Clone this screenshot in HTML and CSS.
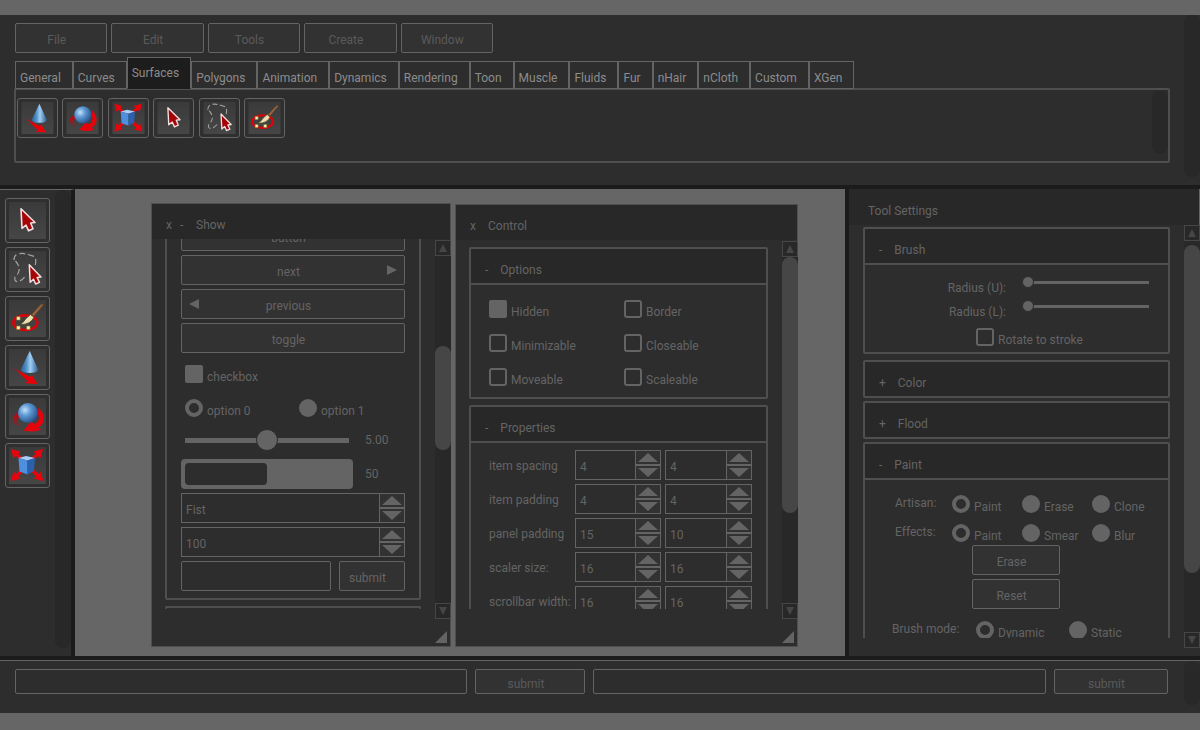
FILE: index.html
```html
<!DOCTYPE html>
<html lang="en">
<head>
<meta charset="utf-8">
<title>Tool Settings</title>
<link rel="stylesheet" href="styles.css">
</head>
<body>
<svg class="sprite" aria-hidden="true">
  <defs>
    <linearGradient id="tile" x1="0" y1="0" x2="0" y2="1"><stop offset="0" stop-color="#3a3a3a"/><stop offset="1" stop-color="#464646"/></linearGradient>
    <linearGradient id="coneFill" x1="0" y1="0" x2="1" y2="0"><stop offset="0" stop-color="#2c6298"/><stop offset=".3" stop-color="#4d8cc4"/><stop offset=".55" stop-color="#9fcdf2"/><stop offset="1" stop-color="#2b5c92"/></linearGradient>
    <radialGradient id="ballFill" cx=".35" cy=".35" r=".7"><stop offset="0" stop-color="#c4e0f8"/><stop offset=".4" stop-color="#5f9ad4"/><stop offset="1" stop-color="#254f88"/></radialGradient>
    <linearGradient id="fade" x1="0" y1="0" x2="1" y2="1"><stop offset="0" stop-color="#e00008" stop-opacity=".25"/><stop offset=".4" stop-color="#e80008"/></linearGradient>
    <linearGradient id="fadeUp" x1="0" y1="0" x2="0" y2="1"><stop offset="0" stop-color="#d00008"/><stop offset="1" stop-color="#d00008" stop-opacity=".15"/></linearGradient>
  </defs>
  <symbol id="i-select" viewBox="0 0 37 37">
    <rect width="37" height="37" fill="url(#tile)"/>
    <path d="M12 6.7 26 20.5 21.7 21 24 26.8 19.6 28.8 17 23.2 13 26.3Z" fill="#a60206" stroke="#f1dede" stroke-width="1.6" stroke-linejoin="round"/>
  </symbol>
  <symbol id="i-lasso" viewBox="0 0 37 37">
    <rect width="37" height="37" fill="url(#tile)"/>
    <path d="M5 9Q5 4 9 3T16 2.8 23.5 4.8 26.3 14M6.5 10Q10 14 10.2 18T6 26Q5 31 9 30.5T17 24" fill="none" stroke="#a4a4a4" stroke-width="1.2" stroke-dasharray="6 3"/>
    <path d="M20.3 13.800 32 26 28.200 26.600 30.500 31.400 26.600 33 24.500 28.200 21.200 31.200Z" fill="#a60206" stroke="#f1dede" stroke-width="1.500" stroke-linejoin="round"/>
  </symbol>
  <symbol id="i-paint" viewBox="0 0 37 37">
    <rect width="37" height="37" fill="url(#tile)"/>
    <ellipse cx="16.300" cy="22.700" rx="12" ry="7.300" fill="none" stroke="#d8040c" stroke-width="2.600"/>
    <path d="M22.500 14.500 32 4.200Q34 3 34.300 5L24.800 16.500Z" fill="#94653f" stroke="#5a3a20" stroke-width=".6"/>
    <path d="M21.500 14.500 25 17.200Q22 24.500 11 24.700 15 22 17 18.500Z" fill="#eadfae" stroke="#4a4326" stroke-width=".8"/>
    <path d="M7.700 16.700h3.400v3.400H7.700zM7.700 26h3.400v3.400H7.700zM17.700 26h3.400v3.400h-3.400z" fill="#fff8c0" stroke="#8b7d28" stroke-width=".7"/>
  </symbol>
  <symbol id="i-move" viewBox="0 0 37 37">
    <rect width="37" height="37" fill="url(#tile)"/>
    <path d="M20.700 2 29.300 20.700Q28 24 20.500 24T11.700 20.700Z" fill="url(#coneFill)"/>
    <path d="M3.500 18 21 28 22.500 25.500 28.500 35.300 16.500 34.300 18.500 32Z" fill="url(#fade)"/>
  </symbol>
  <symbol id="i-rotate" viewBox="0 0 37 37">
    <rect width="37" height="37" fill="url(#tile)"/>
    <path d="M8 15Q-.5 21 8 29L10.500 27Q6 22 10.500 19Z" fill="url(#fadeUp)"/>
    <path d="M29.500 9.500Q36 16 34.500 23 33 28 29 29.500L32 32Q24 34.500 14.500 32.500L22.500 23 24.500 26Q32 24 29 16Z" fill="#e5040c"/>
    <circle cx="19" cy="15" r="10" fill="url(#ballFill)"/>
  </symbol>
  <symbol id="i-scale" viewBox="0 0 37 37">
    <rect width="37" height="37" fill="url(#tile)"/>
    <path d="M2 2 11.500 4.500 9.300 6.800 14 11 11.500 13.500 7 9 4.500 11.300ZM34 2 24.500 4.500 26.700 6.800 22 11 24.500 13.500 29 9 31.500 11.300ZM2 34 11.500 31.800 9.300 29.500 14 25 11.500 22.500 7 27 4.500 24.500ZM34.300 34 25 31.800 27.200 29.500 22.500 25 25 22.500 29.500 27 32 24.500Z" fill="#e8040c"/>
    <path d="M9.500 11 17 9 26 11 18.500 13.500Z" fill="#a9cdf3"/>
    <path d="M9.500 11 18.500 13.500V27.500L10.500 24.500Z" fill="#4f8fdf"/>
    <path d="M18.500 13.500 26 11 25 24 18.500 27.500Z" fill="#2a60ac"/>
  </symbol>
</svg>

<header class="top">
  <div class="top-main">
    <nav class="menu">
      <button class="btn">File</button>
      <button class="btn">Edit</button>
      <button class="btn">Tools</button>
      <button class="btn">Create</button>
      <button class="btn">Window</button>
    </nav>
    <div class="tabs" role="tablist">
      <button class="tab" role="tab">General</button>
      <button class="tab" role="tab">Curves</button>
      <button class="tab active" role="tab" aria-selected="true">Surfaces</button>
      <button class="tab" role="tab">Polygons</button>
      <button class="tab" role="tab">Animation</button>
      <button class="tab" role="tab">Dynamics</button>
      <button class="tab" role="tab">Rendering</button>
      <button class="tab" role="tab">Toon</button>
      <button class="tab" role="tab">Muscle</button>
      <button class="tab" role="tab">Fluids</button>
      <button class="tab" role="tab">Fur</button>
      <button class="tab" role="tab">nHair</button>
      <button class="tab" role="tab">nCloth</button>
      <button class="tab" role="tab">Custom</button>
      <button class="tab" role="tab">XGen</button>
    </div>
    <div class="shelf">
      <div class="shelf-icons">
        <button class="icon" aria-label="Move"><svg><use href="#i-move"/></svg></button>
        <button class="icon" aria-label="Rotate"><svg><use href="#i-rotate"/></svg></button>
        <button class="icon" aria-label="Scale"><svg><use href="#i-scale"/></svg></button>
        <button class="icon" aria-label="Select"><svg><use href="#i-select"/></svg></button>
        <button class="icon" aria-label="Lasso"><svg><use href="#i-lasso"/></svg></button>
        <button class="icon" aria-label="Paint"><svg><use href="#i-paint"/></svg></button>
      </div>
      <div class="rail"></div>
    </div>
  </div>
  <div class="rail"></div>
</header>

<main class="middle">
  <aside class="toolbox">
    <div class="tools">
      <button class="icon" aria-label="Select"><svg><use href="#i-select"/></svg></button>
      <button class="icon" aria-label="Lasso"><svg><use href="#i-lasso"/></svg></button>
      <button class="icon" aria-label="Paint"><svg><use href="#i-paint"/></svg></button>
      <button class="icon" aria-label="Move"><svg><use href="#i-move"/></svg></button>
      <button class="icon" aria-label="Rotate"><svg><use href="#i-rotate"/></svg></button>
      <button class="icon" aria-label="Scale"><svg><use href="#i-scale"/></svg></button>
    </div>
    <div class="rail"></div>
  </aside>

  <section class="canvas">
    <section class="window show">
      <header class="title"><button class="plain">x</button><button class="plain">-</button><h2>Show</h2></header>
      <div class="frame">
        <div class="content from-end">
          <div class="group">
            <div class="rows">
              <button class="btn">button</button>
              <button class="btn with-arrow">next<i class="tri right"></i></button>
              <button class="btn with-arrow">previous<i class="tri left"></i></button>
              <button class="btn">toggle</button>
              <label class="opt"><input type="checkbox"><span>checkbox</span></label>
              <div class="pair">
                <label class="opt"><input type="radio" name="option" checked><span>option 0</span></label>
                <label class="opt"><input type="radio" name="option"><span>option 1</span></label>
              </div>
              <div class="valued"><input class="slider" type="range" min="0" max="10" value="5" aria-label="Value"><output>5.00</output></div>
              <div class="valued"><progress max="100" value="50" aria-label="Progress"></progress><output>50</output></div>
              <div class="spin"><select aria-label="Weapon"><option>Fist</option></select><div class="steps"><button aria-label="Previous"><i class="tri up"></i></button><button aria-label="Next"><i class="tri down"></i></button></div></div>
              <div class="spin"><input type="text" value="100" aria-label="Amount"><div class="steps"><button aria-label="Increase"><i class="tri up"></i></button><button aria-label="Decrease"><i class="tri down"></i></button></div></div>
              <div class="entry"><input class="field" type="text" aria-label="Text"><button class="btn">submit</button></div>
            </div>
          </div>
          <div class="group stub"></div>
        </div>
        <div class="scroll mid"><button aria-label="Scroll up"><i class="tri s-up"></i></button><div class="track"><div class="thumb"></div></div><button aria-label="Scroll down"><i class="tri s-down"></i></button></div>
      </div>
      <footer class="grip"><i></i></footer>
    </section>

    <section class="window control">
      <header class="title"><button class="plain">x</button><h2>Control</h2></header>
      <div class="frame">
        <div class="content">
          <div class="group">
            <h3><button class="plain">-</button>Options</h3>
            <div class="options">
              <label class="opt"><input type="checkbox"><span>Hidden</span></label>
              <label class="opt"><input type="checkbox" checked><span>Border</span></label>
              <label class="opt"><input type="checkbox" checked><span>Minimizable</span></label>
              <label class="opt"><input type="checkbox" checked><span>Closeable</span></label>
              <label class="opt"><input type="checkbox" checked><span>Moveable</span></label>
              <label class="opt"><input type="checkbox" checked><span>Scaleable</span></label>
            </div>
          </div>
          <div class="group">
            <h3><button class="plain">-</button>Properties</h3>
            <div class="props">
              <label for="p1">item spacing</label>
              <div class="spin"><input id="p1" type="text" value="4"><div class="steps"><button aria-label="Increase"><i class="tri up"></i></button><button aria-label="Decrease"><i class="tri down"></i></button></div></div>
              <div class="spin"><input type="text" value="4" aria-label="item spacing y"><div class="steps"><button aria-label="Increase"><i class="tri up"></i></button><button aria-label="Decrease"><i class="tri down"></i></button></div></div>
              <label for="p2">item padding</label>
              <div class="spin"><input id="p2" type="text" value="4"><div class="steps"><button aria-label="Increase"><i class="tri up"></i></button><button aria-label="Decrease"><i class="tri down"></i></button></div></div>
              <div class="spin"><input type="text" value="4" aria-label="item padding y"><div class="steps"><button aria-label="Increase"><i class="tri up"></i></button><button aria-label="Decrease"><i class="tri down"></i></button></div></div>
              <label for="p3">panel padding</label>
              <div class="spin"><input id="p3" type="text" value="15"><div class="steps"><button aria-label="Increase"><i class="tri up"></i></button><button aria-label="Decrease"><i class="tri down"></i></button></div></div>
              <div class="spin"><input type="text" value="10" aria-label="panel padding y"><div class="steps"><button aria-label="Increase"><i class="tri up"></i></button><button aria-label="Decrease"><i class="tri down"></i></button></div></div>
              <label for="p4">scaler size:</label>
              <div class="spin"><input id="p4" type="text" value="16"><div class="steps"><button aria-label="Increase"><i class="tri up"></i></button><button aria-label="Decrease"><i class="tri down"></i></button></div></div>
              <div class="spin"><input type="text" value="16" aria-label="scaler size y"><div class="steps"><button aria-label="Increase"><i class="tri up"></i></button><button aria-label="Decrease"><i class="tri down"></i></button></div></div>
              <label for="p5">scrollbar width:</label>
              <div class="spin"><input id="p5" type="text" value="16"><div class="steps"><button aria-label="Increase"><i class="tri up"></i></button><button aria-label="Decrease"><i class="tri down"></i></button></div></div>
              <div class="spin"><input type="text" value="16" aria-label="scrollbar width y"><div class="steps"><button aria-label="Increase"><i class="tri up"></i></button><button aria-label="Decrease"><i class="tri down"></i></button></div></div>
            </div>
          </div>
        </div>
        <div class="scroll high"><button aria-label="Scroll up"><i class="tri s-up"></i></button><div class="track"><div class="thumb"></div></div><button aria-label="Scroll down"><i class="tri s-down"></i></button></div>
      </div>
      <footer class="grip"><i></i></footer>
    </section>
  </section>

  <aside class="settings">
    <header class="title"><h2>Tool Settings</h2></header>
    <div class="frame">
      <div class="content">
        <div class="group">
          <h3><button class="plain">-</button>Brush</h3>
          <div class="brush">
            <div class="radius"><label for="ru">Radius (U):</label><input id="ru" class="slider thin" type="range" value="0"></div>
            <div class="radius"><label for="rl">Radius (L):</label><input id="rl" class="slider thin" type="range" value="0"></div>
            <label class="opt rotate"><input type="checkbox" checked><span>Rotate to stroke</span></label>
          </div>
        </div>
        <div class="group closed"><h3><button class="plain">+</button>Color</h3></div>
        <div class="group closed"><h3><button class="plain">+</button>Flood</h3></div>
        <div class="group">
          <h3><button class="plain">-</button>Paint</h3>
          <div class="paint">
            <div class="choices">
              <b>Artisan:</b>
              <label class="opt"><input type="radio" name="artisan" checked><span>Paint</span></label>
              <label class="opt"><input type="radio" name="artisan"><span>Erase</span></label>
              <label class="opt"><input type="radio" name="artisan"><span>Clone</span></label>
            </div>
            <div class="choices">
              <b>Effects:</b>
              <label class="opt"><input type="radio" name="effects" checked><span>Paint</span></label>
              <label class="opt"><input type="radio" name="effects"><span>Smear</span></label>
              <label class="opt"><input type="radio" name="effects"><span>Blur</span></label>
            </div>
            <button class="btn">Erase</button>
            <button class="btn">Reset</button>
            <div class="choices modes">
              <b>Brush mode:</b>
              <label class="opt"><input type="radio" name="mode" checked><span>Dynamic</span></label>
              <label class="opt"><input type="radio" name="mode"><span>Static</span></label>
            </div>
          </div>
        </div>
      </div>
      <div class="scroll tall"><button aria-label="Scroll up"><i class="tri s-up"></i></button><div class="track"><div class="thumb"></div></div><button aria-label="Scroll down"><i class="tri s-down"></i></button></div>
    </div>
  </aside>
</main>

<footer class="bottom">
  <form class="commands">
    <input class="field" type="text" aria-label="Command">
    <button class="btn" type="button">submit</button>
    <input class="field" type="text" aria-label="Second command">
    <button class="btn" type="button">submit</button>
  </form>
  <div class="rail"></div>
</footer>
</body>
</html>
```
FILE: styles.css
```css
:root {
  --page: #666666;
  --panel: #2d2d2d;
  --head: #282828;
  --gutter: #1b1b1b;
  --line: #646464;
  --group: #4f4f4f;
  --thumb: #464646;
  --text: #646464;
}

* { box-sizing: border-box; }

body {
  margin: 0;
  padding: 15px 0 17px;
  height: 100vh;
  display: flex;
  flex-direction: column;
  background: var(--page);
  color: var(--text);
  font: 12px/16px Roboto, sans-serif;
}

button, input, select { font: inherit; color: inherit; margin: 0; padding: 0; }
button { cursor: pointer; }
h2, h3 { margin: 0; font: inherit; }
.sprite { position: absolute; width: 0; height: 0; }

.btn {
  height: 30px;
  padding: 4px 9px 0 0;
  border: 1px solid var(--line);
  border-radius: 2px;
  background: #323232;
}
.field {
  min-width: 0;
  padding: 0 4px;
  border: 1px solid var(--line);
  border-radius: 2px;
  background: var(--panel);
}
.plain { border: 0; background: none; }
.rail { flex: none; width: 16px; border-radius: 8px; background: var(--head); }

/* top panel */
.top {
  flex: none;
  display: flex;
  justify-content: space-between;
  padding-bottom: 8px;
  background: var(--panel);
  border-bottom: 4px solid var(--gutter);
}
.top-main { flex: 1; min-width: 0; padding: 8px 14px 14px; }
.menu {
  display: grid;
  grid-template-columns: repeat(5, 1fr);
  gap: 4px;
  width: 478px;
  margin-left: 1px;
}
.menu .btn, .commands .btn { color: #5a5a5a; }
.tabs { display: flex; align-items: flex-end; margin: 4px 0 0 1px; }
.tab {
  height: 28px;
  padding: 5px 11px 0 4px;
  border: 1px solid var(--line);
  background: var(--panel);
  color: #8c8c8c;
}
.tab.active { height: 32px; padding-top: 0; background: #1d1d1d; border-bottom-color: #1d1d1d; }
.shelf {
  display: flex;
  justify-content: space-between;
  height: 75px;
  margin-top: -1px;
  border: 2px solid var(--group);
  border-radius: 2px;
}
.shelf .rail { margin: 1px 0 7px; }
.shelf-icons { display: flex; justify-content: space-between; width: 270px; padding: 8px 1px; }
.icon {
  display: block;
  width: 41px;
  height: 40px;
  padding: 3px;
  border: 1px solid var(--line);
  border-radius: 3px;
  background: #2f2f2f;
}
.icon svg { display: block; width: 100%; height: 100%; }

/* middle */
.middle { flex: 1; min-height: 0; display: flex; }
.toolbox {
  flex: none;
  width: 75px;
  display: flex;
  justify-content: space-between;
  padding-bottom: 8px;
  background: var(--panel);
  border-top: 1px solid var(--page);
  border-right: 4px solid var(--gutter);
}
.tools { display: flex; flex-direction: column; gap: 4px; padding: 8px 5px; }
.tools .icon { width: 45px; height: 45px; }
.canvas { position: relative; flex: 1; min-width: 0; }

.window {
  position: absolute;
  display: flex;
  flex-direction: column;
  background: var(--panel);
  border: 1px solid var(--group);
}
.show { left: 76px; top: 14px; width: 300px; height: 444px; }
.control { left: 380px; top: 15px; width: 343px; height: 443px; }
.title { flex: none; display: flex; align-items: center; height: 35px; padding: 6px 14px 0; background: var(--head); }
.title .plain { width: 14px; text-align: left; }
.title h2 { margin-left: 4px; }
.show .title .plain + .plain { width: 12px; }
.frame { flex: 1; min-height: 0; display: flex; justify-content: space-between; }
.content { flex: 1; min-width: 0; overflow: hidden; display: flex; flex-direction: column; margin: 0 14px 10px 13px; }
.from-end { justify-content: flex-end; }
.control .content { padding-top: 7px; }
.grip { flex: none; height: 27px; padding: 12px 3px 0; display: flex; justify-content: flex-end; }
.grip i { width: 12px; height: 12px; background: var(--line); clip-path: polygon(100% 0, 100% 100%, 0 100%); }

.group { flex: none; margin-bottom: 6px; border: 2px solid var(--group); border-radius: 2px; }
.group.closed { margin-bottom: 3px; }
.group.closed h3 { border-bottom: 0; }
.group.stub { height: 3px; margin: 0; border-bottom: 0; }
.group h3 { display: flex; align-items: center; height: 36px; padding: 8px 14px 0; background: var(--head); border-bottom: 2px solid var(--group); }
.group.closed h3 { height: 34px; }
.group h3 .plain { margin-right: 12px; }

.rows { display: flex; flex-direction: column; gap: 4px; padding: 7px 14px; }
.with-arrow { position: relative; }
.tri { display: block; background: var(--line); }
.right, .left { position: absolute; top: 9px; width: 10px; height: 10px; }
.right { right: 7px; clip-path: polygon(0 0, 100% 50%, 0 100%); }
.left { left: 7px; clip-path: polygon(100% 0, 100% 100%, 0 50%); }
.up, .down { width: 20px; height: 9px; }
.up { clip-path: polygon(50% 0, 100% 100%, 0 100%); }
.down { clip-path: polygon(0 0, 100% 0, 50% 100%); }
.s-up, .s-down { width: 8px; height: 8px; background: var(--thumb); }
.s-up { clip-path: polygon(50% 0, 100% 100%, 0 100%); }
.s-down { clip-path: polygon(0 0, 100% 0, 50% 100%); }

.opt { display: flex; gap: 4px; height: 30px; padding: 8px 0 0 4px; line-height: 24px; white-space: nowrap; }
.opt input { appearance: none; flex: none; width: 18px; height: 18px; border-radius: 2px; background: var(--line); }
.opt input:checked { border: 2px solid var(--line); border-radius: 3px; background: var(--panel); }
.opt input[type="radio"] { border-radius: 50%; }
.opt input[type="radio"]:checked { border-width: 4px; }
.pair { display: grid; grid-template-columns: 114px 1fr; }

.valued { display: flex; align-items: center; height: 30px; }
.valued output { padding-left: 12px; }
.slider { appearance: none; width: 164px; height: 20px; margin: 0 4px; background: none; }
.slider::-webkit-slider-runnable-track { height: 5px; background: var(--line); }
.slider::-webkit-slider-thumb {
  appearance: none;
  width: 22px;
  height: 22px;
  margin-top: -9px;
  border: 1px solid var(--panel);
  border-radius: 50%;
  background: var(--line);
}
.thin { width: 100%; height: 12px; margin: 4px 0 0; }
.thin::-webkit-slider-runnable-track { height: 3px; }
.thin::-webkit-slider-thumb { width: 12px; height: 12px; margin-top: -5px; }
progress { appearance: none; width: 172px; height: 30px; padding: 4px; border: 0; border-radius: 4px; background: var(--line); }
progress::-webkit-progress-bar { background: var(--line); }
progress::-webkit-progress-value { background: var(--panel); border-radius: 4px; }

.spin { display: flex; min-width: 0; height: 30px; border: 1px solid var(--line); }
.spin input, .spin select { appearance: none; flex: 1; min-width: 0; padding: 3px 4px 0; border: 0; background: none; }
.steps { flex: none; width: 25px; display: grid; grid-template-rows: 1fr 1fr; gap: 2px; background: var(--line); border-left: 1px solid var(--line); }
.steps button { display: flex; justify-content: center; align-items: center; border: 0; background: #323232; }
.entry { display: grid; grid-template-columns: 150px 1fr; gap: 8px; }

.options { display: grid; grid-template-columns: 135px 1fr; row-gap: 4px; padding: 7px 14px; }
.props { display: grid; grid-template-columns: 86px 86px 91px; row-gap: 4px; padding: 7px 14px 7px 18px; }
.props .spin:nth-child(3n) { margin-left: 4px; }
.props label { align-self: center; padding-top: 2px; white-space: nowrap; }

.scroll { flex: none; width: 16px; display: flex; flex-direction: column; padding-top: 1px; margin-right: -1px; }
.scroll button { display: flex; flex: none; align-items: center; justify-content: center; height: 16px; border: 1px solid var(--thumb); background: var(--head); }
.track { flex: 1; display: flex; flex-direction: column; background: var(--head); }
.thumb { border-radius: 8px; background: var(--thumb); }
.mid .thumb { height: 30%; margin-top: 90px; }
.high .thumb { height: 74%; }
.tall .thumb { height: 84%; margin-top: 4px; }

/* right panel */
.settings { flex: none; width: 355px; display: flex; flex-direction: column; background: var(--panel); border-left: 4px solid var(--gutter); padding-bottom: 8px; }
.settings .title { height: 36px; padding-top: 8px; padding-left: 15px; border-right: 1px solid var(--page); }
.settings .content { margin: 0 14px 10px; padding-top: 2px; }
.settings .scroll { padding-top: 0; margin-right: 0; }
.brush { padding: 7px 19px 2px 14px; }
.radius { display: grid; grid-template-columns: 127px 1fr; column-gap: 16px; height: 24px; align-items: start; }
.radius label { text-align: right; padding-top: 8px; }
.rotate { margin-left: 93px; }
.paint { display: flex; flex-direction: column; align-items: center; gap: 4px; padding: 7px 11px 7px 10px; }
.paint > .btn { width: 88px; }
.choices { align-self: stretch; display: grid; grid-template-columns: 53px 70px 70px 1fr; padding-left: 20px; height: 25px; }
.choices b { font-weight: 400; padding-top: 8px; white-space: nowrap; }
.choices .opt { height: 25px; }
.modes { grid-template-columns: 80px 93px 1fr; padding-left: 17px; }

/* bottom panel */
.bottom {
  flex: none;
  display: flex;
  padding-bottom: 8px;
  background: var(--panel);
  border-top: 1px solid var(--page);
  box-shadow: 0 -4px var(--gutter);
  margin-top: 4px;
}
.commands { flex: 1; display: grid; grid-template-columns: 452fr 110fr 452fr 114fr; gap: 8px; padding: 8px 16px 11px 15px; }
.commands .btn { height: 25px; }
```
